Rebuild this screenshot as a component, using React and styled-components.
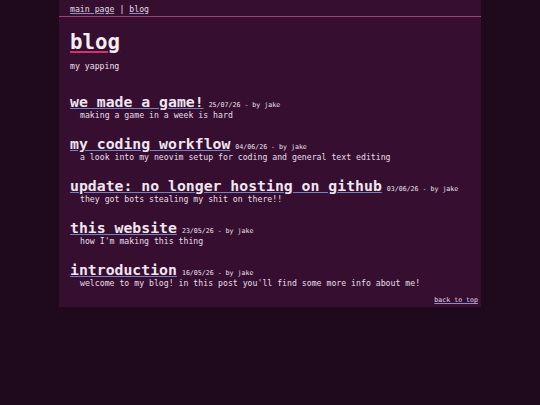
import styled, { createGlobalStyle } from "styled-components";

const Global = createGlobalStyle`
  html, body {
    margin: 0;
    padding: 0;
    background-color: #1f0a1d;
  }
  body {
    font-family: "DejaVu Sans Mono", monospace;
    color: #ece2ea;
  }
`;

const Page = styled.div`
  width: 422px;
  margin: 0 auto;
  background-color: #360e30;
  padding-bottom: 3px;
`;

const Nav = styled.nav`
  display: flex;
  align-items: center;
  gap: 5px;
  height: 17px;
  padding: 1px 11px 0;
  font-size: 8.2px;
  border-bottom: 1px solid #a0406e;
  box-sizing: border-box;
`;

const NavLink = styled.a`
  color: #e6dcea;
  text-decoration: underline;
  text-decoration-color: #8a8fc8;
`;

const Main = styled.main`
  padding: 12px 3px 0 11px;
`;

const Title = styled.h1`
  margin: 0;
  font-size: 20.8px;
  line-height: 26px;
  font-weight: bold;
  color: #f4ecf0;
  text-decoration: underline;
  text-decoration-color: #d0346e;
  text-decoration-thickness: 2px;
  text-underline-offset: 2px;
`;

const Sub = styled.p`
  margin: 6px 0 22px;
  font-size: 8.2px;
`;

const PostList = styled.div`
  display: flex;
  flex-direction: column;
  gap: 15px;
`;

const Post = styled.div`
  display: flex;
  flex-direction: column;
`;

const PostHead = styled.div`
  display: flex;
  align-items: baseline;
  gap: 5px;
`;

const PostTitle = styled.a`
  font-size: 14.8px;
  line-height: 17px;
  font-weight: bold;
  color: #eee6f2;
  text-decoration: underline;
  text-decoration-color: #7780c0;
  text-underline-offset: 1px;
`;

const Meta = styled.span`
  font-size: 6.6px;
  color: #ece2ec;
`;

const Desc = styled.p`
  margin: 0;
  padding-left: 10px;
  font-size: 8.2px;
  line-height: 10px;
  color: #e8dee8;
`;

const Footer = styled.div`
  display: flex;
  justify-content: flex-end;
  margin-top: 8px;
`;

const TopLink = styled.a`
  font-size: 6.6px;
  color: #e6dcea;
  text-decoration: underline;
  text-decoration-color: #8a8fc8;
`;

const posts = [
  { title: "we made a game!", date: "25/07/26", desc: "making a game in a week is hard" },
  { title: "my coding workflow", date: "04/06/26", desc: "a look into my neovim setup for coding and general text editing" },
  { title: "update: no longer hosting on github", date: "03/06/26", desc: "they got bots stealing my shit on there!!" },
  { title: "this website", date: "23/05/26", desc: "how I'm making this thing" },
  { title: "introduction", date: "16/05/26", desc: "welcome to my blog! in this post you'll find some more info about me!" },
];

export default function App() {
  return (
    <>
      <Global />
      <Page>
        <Nav>
          <NavLink href="#">main page</NavLink>
          <span>|</span>
          <NavLink href="#">blog</NavLink>
        </Nav>
        <Main>
          <Title>blog</Title>
          <Sub>my yapping</Sub>
          <PostList>
            {posts.map((p) => (
              <Post key={p.title}>
                <PostHead>
                  <PostTitle href="#">{p.title}</PostTitle>
                  <Meta>{p.date} - by jake</Meta>
                </PostHead>
                <Desc>{p.desc}</Desc>
              </Post>
            ))}
          </PostList>
          <Footer>
            <TopLink href="#">back to top</TopLink>
          </Footer>
        </Main>
      </Page>
    </>
  );
}
